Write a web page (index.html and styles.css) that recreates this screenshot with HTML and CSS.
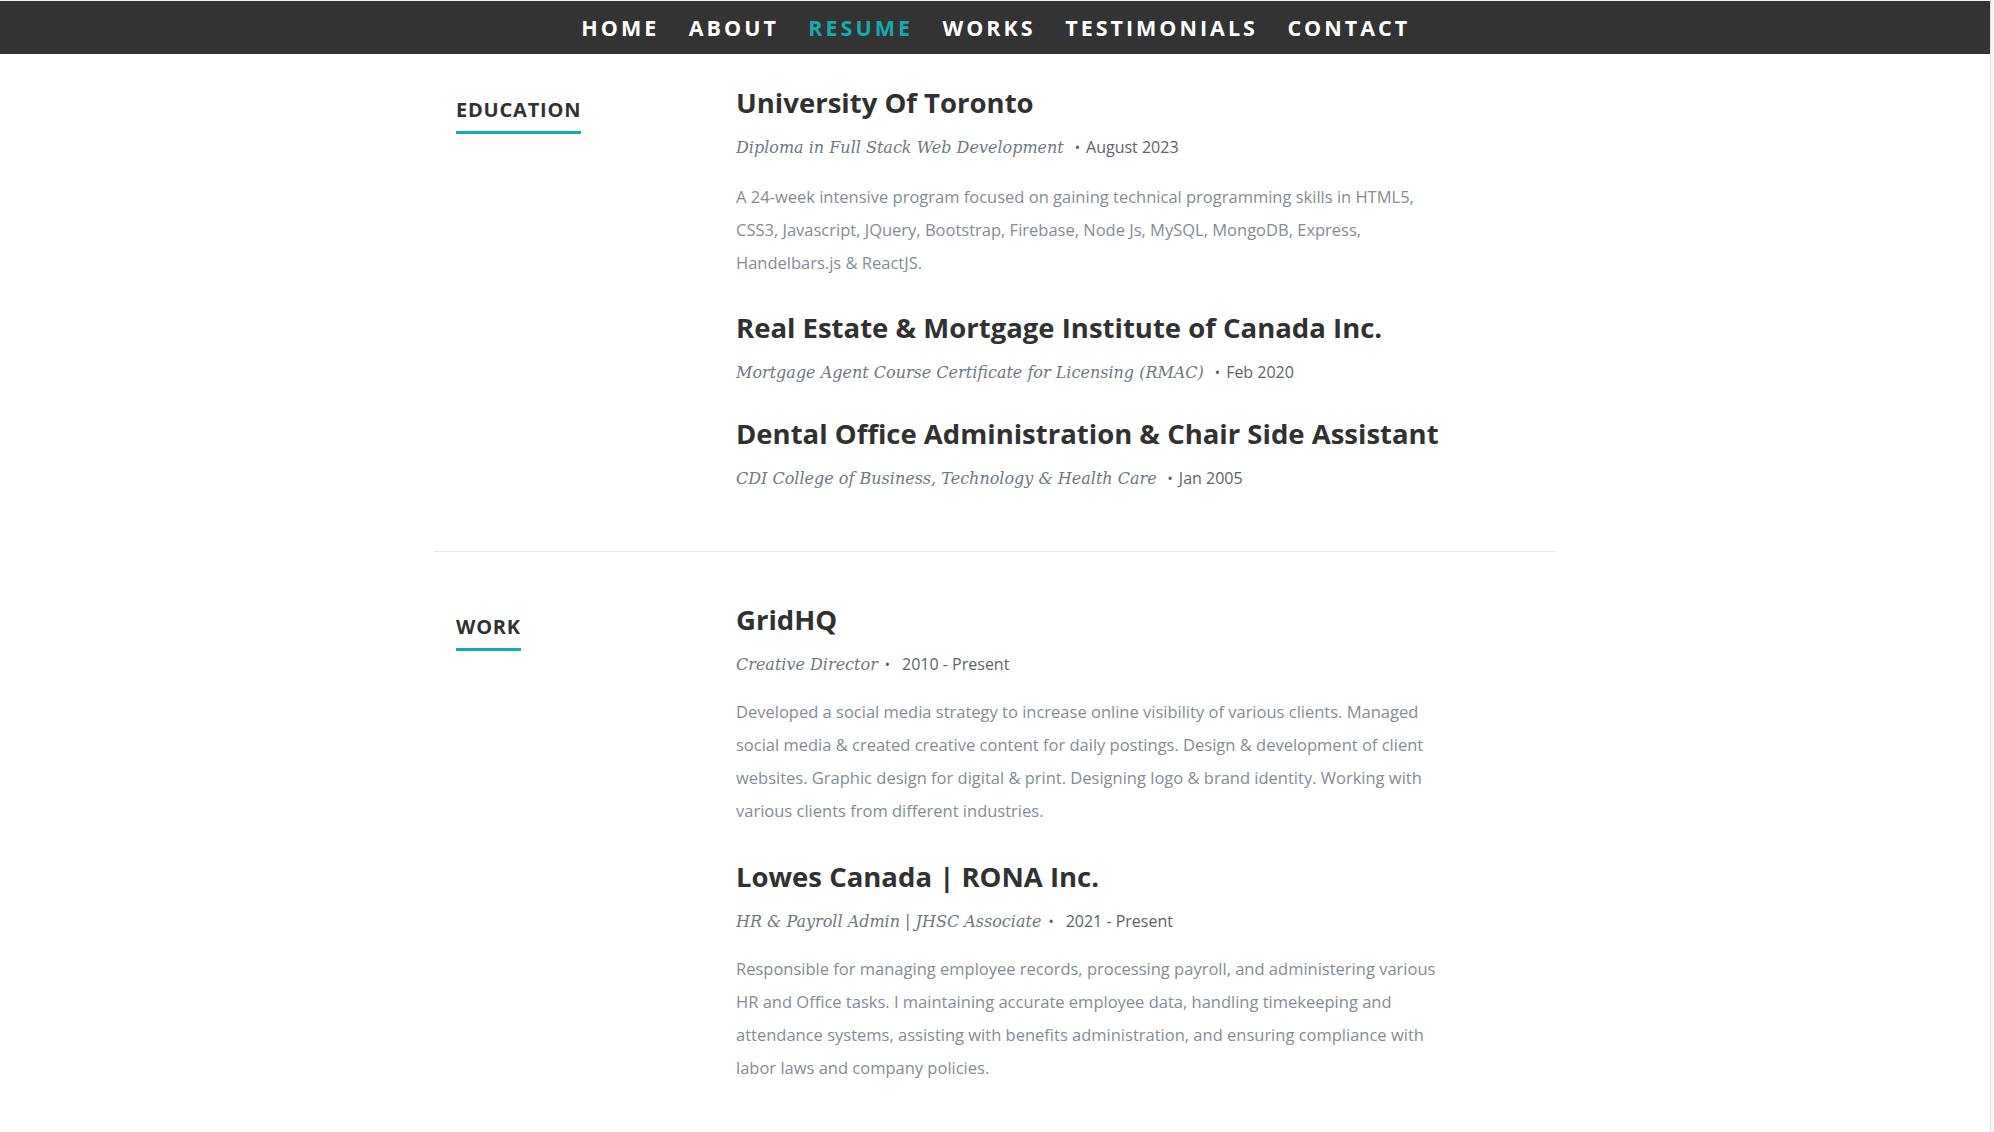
FILE: index.html
```html
<!DOCTYPE html>
<html lang="en">
<head>
<meta charset="utf-8">
<title>Resume</title>
<link rel="stylesheet" href="styles.css">
</head>
<body>
<div class="page">
  <nav class="nav">
    <ul class="nav-list">
      <li><a href="#home">Home</a></li>
      <li><a href="#about">About</a></li>
      <li><a class="current" href="#resume">Resume</a></li>
      <li><a href="#works">Works</a></li>
      <li><a href="#testimonials">Testimonials</a></li>
      <li><a href="#contact">Contact</a></li>
    </ul>
  </nav>

  <section class="block block-education">
    <div class="row">
      <div class="label-col"><h1 class="label"><span>Education</span></h1></div>
      <div class="main-col">
        <div class="entry">
          <h3 class="entry-title">University Of Toronto</h3>
          <p class="info"><em class="role">Diploma in Full Stack Web Development</em><span class="bullet bullet-wide">&bull;</span><span class="date">August 2023</span></p>
          <p class="desc">A 24-week intensive program focused on gaining technical programming skills in HTML5, CSS3, Javascript, JQuery, Bootstrap, Firebase, Node Js, MySQL, MongoDB, Express, Handelbars.js &amp; ReactJS.</p>
        </div>
        <div class="entry">
          <h3 class="entry-title">Real Estate &amp; Mortgage Institute of Canada Inc.</h3>
          <p class="info"><em class="role">Mortgage Agent Course Certificate for Licensing (RMAC)</em><span class="bullet bullet-wide">&bull;</span><span class="date">Feb 2020</span></p>
        </div>
        <div class="entry">
          <h3 class="entry-title">Dental Office Administration &amp; Chair Side Assistant</h3>
          <p class="info"><em class="role">CDI College of Business, Technology &amp; Health Care</em><span class="bullet bullet-wide">&bull;</span><span class="date">Jan 2005</span></p>
        </div>
      </div>
    </div>
  </section>

  <section class="block block-work">
    <div class="row">
      <div class="label-col"><h1 class="label"><span>Work</span></h1></div>
      <div class="main-col">
        <div class="entry">
          <h3 class="entry-title">GridHQ</h3>
          <p class="info"><em class="role">Creative Director</em><span class="bullet bullet-tight">&bull;</span><span class="date">2010 - Present</span></p>
          <p class="desc">Developed a social media strategy to increase online visibility of various clients. Managed social media &amp; created creative content for daily postings. Design &amp; development of client websites. Graphic design for digital &amp; print. Designing logo &amp; brand identity. Working with various clients from different industries.</p>
        </div>
        <div class="entry">
          <h3 class="entry-title">Lowes Canada | RONA Inc.</h3>
          <p class="info"><em class="role">HR &amp; Payroll Admin | JHSC Associate</em><span class="bullet bullet-tight">&bull;</span><span class="date">2021 - Present</span></p>
          <p class="desc">Responsible for managing employee records, processing payroll, and administering various HR and Office tasks. I maintaining accurate employee data, handling timekeeping and attendance systems, assisting with benefits administration, and ensuring compliance with labor laws and company policies.</p>
        </div>
      </div>
    </div>
  </section>
</div>
</body>
</html>
```

FILE: styles.css
```css
* { box-sizing: border-box; }

html {
  background: #f6f6f6;
}

body {
  margin: 0;
  font-family: "Open Sans", "Liberation Sans", sans-serif;
  color: #313131;
}

.page {
  width: calc(100% - 3px);
  min-height: 100vh;
  background: #ffffff;
  border-right: 1px solid #e2e2e2;
}

/* NAV */
.nav {
  background: #333333;
  height: 54px;
  border-top: 1px solid #f0f0f0;
}

.nav-list {
  list-style: none;
  margin: 0;
  padding: 0;
  display: flex;
  justify-content: center;
  align-items: center;
  height: 100%;
}

.nav-list a {
  display: block;
  padding: 0 14px 0 15.5px;
  font-weight: 700;
  font-size: 21.5px;
  line-height: 53px;
  letter-spacing: 3px;
  text-transform: uppercase;
  text-decoration: none;
  color: #ffffff;
}

.nav-list a.current {
  color: #11abb0;
}

/* BLOCKS */
.block {
  width: 1122px;
  margin: 0 auto;
}

.block-education {
  padding-top: 34px;
  padding-bottom: 60px;
  border-bottom: 1px solid #e8e8e8;
}

.block-work {
  padding-top: 53px;
  padding-bottom: 40px;
}

.row {
  display: grid;
  grid-template-columns: 280px 1fr;
}

.label-col {
  padding: 10px 22px 0 22px;
}

.label {
  margin: 0;
  font-size: 20px;
  line-height: 24px;
  font-weight: 700;
  letter-spacing: 0.8px;
  text-transform: uppercase;
  color: #313131;
}

.label span {
  display: inline-block;
  padding-bottom: 9px;
  border-bottom: 3px solid #11abb0;
}

.main-col {
  padding: 0 112px 0 22px;
}

.entry + .entry {
  margin-top: 34px;
}

.block-work .entry + .entry {
  margin-top: 35px;
}

.entry-title {
  margin: 0;
  font-size: 27.5px;
  line-height: 30px;
  font-weight: 700;
  color: #313131;
}

.info {
  margin: 17px 0 0 0;
  font-size: 16px;
  line-height: 24px;
  color: #6e7881;
}

.role {
  font-family: "DejaVu Serif", "Liberation Serif", serif;
  font-style: italic;
  font-size: 16px;
  color: #6e7881;
}

.bullet {
  font-family: "Open Sans", sans-serif;
  font-size: 14px;
  color: #555b61;
}

.bullet-wide {
  margin: 0 6px 0 11px;
}

.bullet-tight {
  margin: 0 12px 0 7px;
}

.date {
  font-size: 16px;
  color: #5e6368;
}

.desc {
  margin: 20px 0 0 0;
  font-size: 16.5px;
  line-height: 33px;
  color: #838c95;
}

.block-work .desc {
  margin-top: 18px;
}
```
